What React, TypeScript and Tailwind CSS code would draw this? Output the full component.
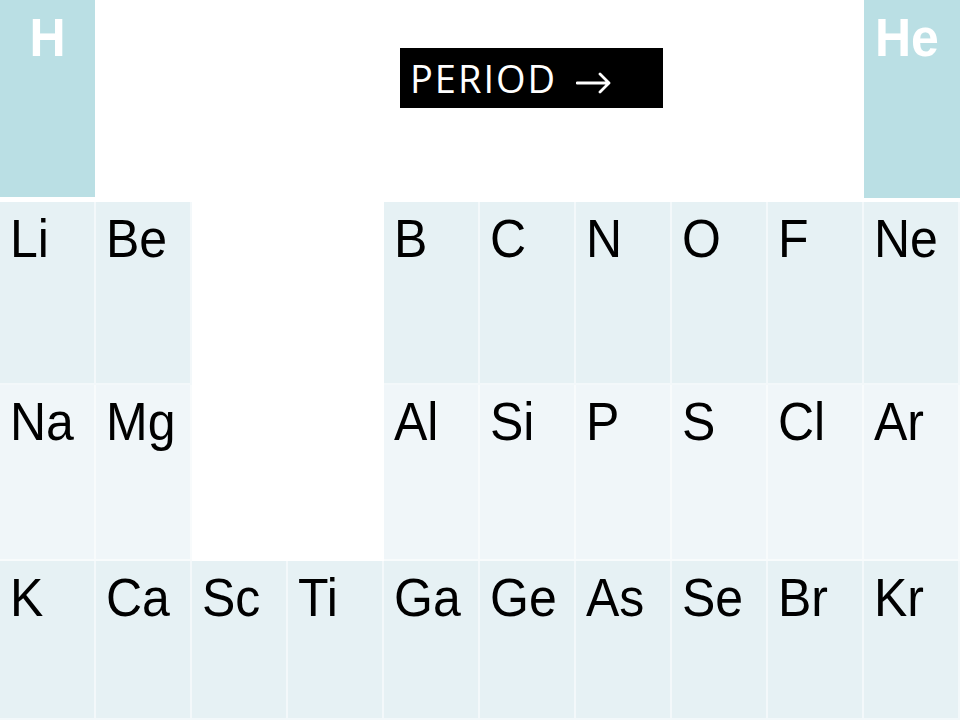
const rows: { tint: string; items: (string | null)[] }[] = [
  { tint: "bg-[#e6f1f4]", items: ["Li", "Be", null, null, "B", "C", "N", "O", "F", "Ne"] },
  { tint: "bg-[#f0f6f9]", items: ["Na", "Mg", null, null, "Al", "Si", "P", "S", "Cl", "Ar"] },
  { tint: "bg-[#e6f1f4]", items: ["K", "Ca", "Sc", "Ti", "Ga", "Ge", "As", "Se", "Br", "Kr"] },
];

function Symbol({ children, bold }: { children: string; bold?: boolean }) {
  return (
    <span
      className={`inline-block origin-top scale-y-[1.07] text-[50px] leading-none ${
        bold ? "font-bold text-white" : "text-black"
      }`}
    >
      {children}
    </span>
  );
}

function Arrow() {
  return (
    <svg width="36" height="22" viewBox="0 0 36 22" fill="none" aria-hidden="true" className="mt-[9px]">
      <path d="M1 11H33M24 2l9 9-9 9" stroke="white" strokeWidth="2.8" strokeLinecap="round" strokeLinejoin="round" />
    </svg>
  );
}

export default function App() {
  return (
    <div className="h-[720px] w-[960px] overflow-hidden bg-white font-['Liberation_Sans',Arial,sans-serif]">
      {/* top row: H, period label, He */}
      <div className="flex h-[202px] items-start">
        <div className="flex h-[197px] w-[95px] justify-center bg-[#badfe4] pt-[11px]">
          <Symbol bold>H</Symbol>
        </div>
        <div className="flex-1 pl-[305px] pt-[48px]">
          <div className="flex h-[60px] w-[263px] items-center gap-[19px] bg-black pl-[10px] font-['Open_Sans',sans-serif] text-[38px] leading-none tracking-[2px] text-white">
            <span>PERIOD</span>
            <Arrow />
          </div>
        </div>
        <div className="h-[198px] w-[96px] bg-[#badfe4] pl-[11px] pt-[11px]">
          <Symbol bold>He</Symbol>
        </div>
      </div>

      <div className="grid grid-cols-[repeat(10,96px)] grid-rows-[183px_176px_159px]">
        {rows.map((row, r) =>
          row.items.map((el, c) =>
            el ? (
              <div
                key={`${r}-${c}`}
                className={`${row.tint} border-b-2 border-r-2 border-white/50 pl-[10px] pt-[10px]`}
              >
                <Symbol>{el}</Symbol>
              </div>
            ) : (
              <div key={`${r}-${c}`} />
            )
          )
        )}
      </div>
    </div>
  );
}
